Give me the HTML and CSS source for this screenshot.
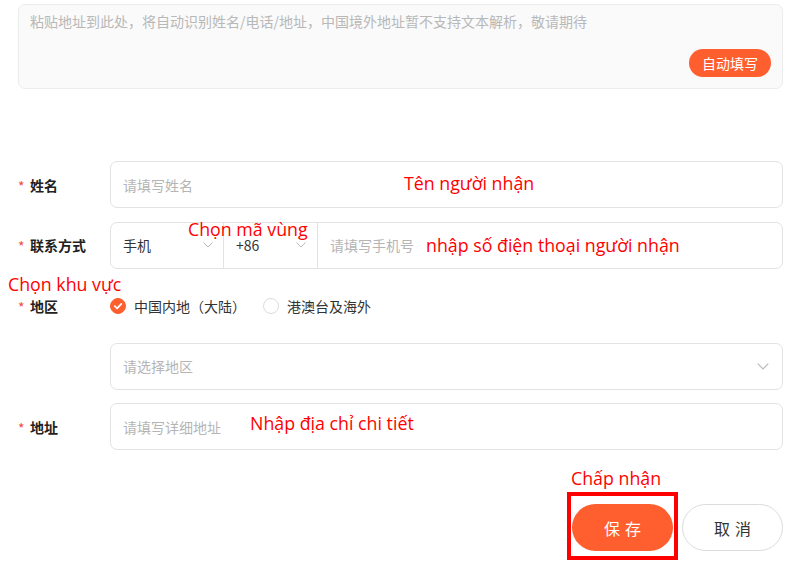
FILE: index.html
```html
<!DOCTYPE html>
<html lang="zh">
<head>
<meta charset="utf-8">
<title>地址</title>
<link rel="stylesheet" href="styles.css">
</head>
<body>
<div class="page">
  <div class="paste">
    <div class="paste-text">粘贴地址到此处，将自动识别姓名/电话/地址，中国境外地址暂不支持文本解析，敬请期待</div>
    <div class="paste-foot"><button class="auto-btn">自动填写</button></div>
  </div>

  <div class="form">
    <div class="row">
      <div class="label"><span class="star">*</span>姓名</div>
      <div class="field"><span class="ph">请填写姓名</span></div>
    </div>

    <div class="row">
      <div class="label"><span class="star">*</span>联系方式</div>
      <div class="field phone">
        <div class="seg seg-type"><span class="val">手机</span><svg class="chev" viewBox="0 0 10 6"><path d="M0.5 0.5 L5 5 L9.5 0.5"/></svg></div>
        <div class="seg seg-code"><span class="val">+86</span><svg class="chev" viewBox="0 0 10 6"><path d="M0.5 0.5 L5 5 L9.5 0.5"/></svg></div>
        <div class="seg seg-num"><span class="ph">请填写手机号</span></div>
      </div>
    </div>

    <div class="row">
      <div class="label"><span class="star">*</span>地区</div>
      <div class="radios">
        <label class="radio"><span class="dot on"><svg viewBox="0 0 16 16"><path d="M4.3 8.2 L7 10.8 L11.8 5.6"/></svg></span>中国内地（大陆）</label>
        <label class="radio"><span class="dot"></span>港澳台及海外</label>
      </div>
    </div>

    <div class="row">
      <div class="label"></div>
      <div class="field select"><span class="ph">请选择地区</span><svg class="chev" viewBox="0 0 10 6"><path d="M0.5 0.5 L5 5 L9.5 0.5"/></svg></div>
    </div>

    <div class="row">
      <div class="label"><span class="star">*</span>地址</div>
      <div class="field"><span class="ph">请填写详细地址</span></div>
    </div>
  </div>

  <div class="actions">
    <button class="btn save">保存</button>
    <button class="btn cancel">取消</button>
  </div>

  <div class="note note-name">Tên người nhận</div>
  <div class="note note-code">Chọn mã vùng</div>
  <div class="note note-phone">nhập số điện thoại người nhận</div>
  <div class="note note-area">Chọn khu vực</div>
  <div class="note note-addr">Nhập địa chỉ chi tiết</div>
  <div class="note note-ok">Chấp nhận</div>
  <div class="highlight"></div>
</div>
</body>
</html>
```

FILE: styles.css
```css
* { box-sizing: border-box; }
html, body {
  margin: 0;
  padding: 0;
  background: #fff;
}
body {
  font-family: "Noto Sans CJK SC", "Noto Sans", sans-serif;
  font-size: 14px;
  color: #333;
}
.page {
  position: relative;
  width: 800px;
  height: 563px;
  overflow: hidden;
  padding-top: 4px;
}
.paste {
  margin: 0 17px 0 18px;
  height: 85px;
  background: #fafafa;
  border: 1px solid #ececec;
  border-radius: 7px;
  padding: 6px 11px 11px 11px;
  display: flex;
  flex-direction: column;
  justify-content: space-between;
}
.paste-text {
  color: #b8b8b8;
  line-height: 20px;
  font-size: 14px;
}
.paste-foot {
  display: flex;
  justify-content: flex-end;
}
.auto-btn {
  height: 28px;
  width: 82px;
  border: none;
  border-radius: 14px;
  background: #ff5f2e;
  color: #fff;
  font-family: inherit;
  font-size: 14px;
  padding: 0;
  line-height: 28px;
}
.form {
  margin-top: 72px;
  display: flex;
  flex-direction: column;
  gap: 13.6px;
}
.row {
  display: flex;
  align-items: center;
  height: 47px;
  padding-right: 17px;
}
.label {
  width: 110px;
  flex: none;
  padding-left: 18px;
  font-weight: bold;
  color: #222;
  font-size: 14px;
  display: flex;
  align-items: center;
}
.star {
  color: #f04a4a;
  font-weight: normal;
  font-size: 14px;
  width: 12px;
  position: relative;
  top: 1px;
}
.field {
  flex: 1;
  height: 47px;
  border: 1px solid #e3e3e3;
  border-radius: 7px;
  display: flex;
  align-items: center;
  padding-left: 12px;
  background: #fff;
}
.ph { color: #b5b5b5; }
.val { color: #333; }
.phone { padding-left: 0; }
.seg {
  height: 100%;
  display: flex;
  align-items: center;
  padding-left: 12px;
}
.seg-type { width: 113px; border-right: 1px solid #e3e3e3; justify-content: space-between; padding-right: 10px; }
.seg-code { width: 94px; border-right: 1px solid #e3e3e3; justify-content: space-between; padding-right: 11px; }
.seg-num { flex: 1; }
.chev {
  width: 10px;
  height: 6px;
  fill: none;
  stroke: #b8b8b8;
  stroke-width: 1;
}
.select { justify-content: space-between; padding-right: 13px; }
.select .chev { width: 12px; height: 7px; }
.radios {
  display: flex;
  align-items: center;
  gap: 17px;
}
.radio {
  display: flex;
  align-items: center;
  gap: 8px;
  color: #333;
}
.dot {
  width: 16px;
  height: 16px;
  border-radius: 50%;
  border: 1px solid #dcdcdc;
  background: #fff;
  display: inline-flex;
}
.dot.on {
  background: #ff5f2e;
  border-color: #ff5f2e;
}
.dot svg {
  width: 14px;
  height: 14px;
  fill: none;
  stroke: #fff;
  stroke-width: 2;
  stroke-linecap: round;
  stroke-linejoin: round;
}
.actions {
  margin-top: 54px;
  display: flex;
  justify-content: flex-end;
  gap: 9px;
  padding-right: 17px;
}
.btn {
  width: 101px;
  height: 47px;
  border-radius: 24px;
  font-family: inherit;
  font-size: 16px;
  letter-spacing: 5px;
  text-indent: 5px;
  padding: 0;
}
.save {
  background: #ff5f2e;
  border: none;
  color: #fff;
}
.cancel {
  background: #fff;
  border: 1px solid #dcdcdc;
  color: #333;
}
.note {
  position: absolute;
  color: #ff0000;
  font-family: "Open Sans", "Noto Sans", sans-serif;
  font-size: 17.8px;
  line-height: 22px;
  white-space: nowrap;
}
.note-name { left: 404px; top: 172px; }
.note-code { left: 188px; top: 218px; }
.note-phone { left: 426px; top: 234px; }
.note-area { left: 8px; top: 273px; }
.note-addr { left: 250px; top: 412px; }
.note-ok { left: 571px; top: 467px; }
.highlight {
  position: absolute;
  left: 567px;
  top: 492px;
  width: 111px;
  height: 68px;
  border: 4px solid #f00;
}
```
